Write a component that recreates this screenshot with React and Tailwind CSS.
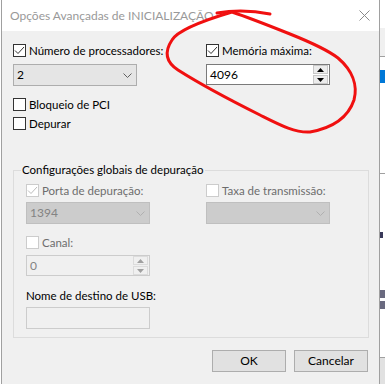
import React from 'react'

function Check({ checked, disabled }) {
  return (
    <span
      className={`flex h-[13px] w-[13px] shrink-0 items-center justify-center border bg-white ${
        disabled ? 'border-[#cccccc]' : 'border-[#333333]'
      }`}
    >
      {checked && (
        <svg width="11" height="11" viewBox="0 0 11 11" fill="none">
          <path d="M1 5.5 L4 8.5 L10 2" stroke={disabled ? '#bcbcbc' : '#333333'} strokeWidth="1" />
        </svg>
      )}
    </span>
  )
}

function CheckRow({ label, checked, disabled }) {
  return (
    <div className="flex h-[13px] items-center gap-[3px]">
      <Check checked={checked} disabled={disabled} />
      <span className={`whitespace-nowrap leading-[16px] ${disabled ? 'text-[#6d6d6d]' : 'text-black'}`}>
        {label}
      </span>
    </div>
  )
}

function Chevron({ disabled }) {
  return (
    <svg width="9" height="5" viewBox="0 0 9 5" fill="none">
      <path d="M0.5 0.5 L4.5 4.5 L8.5 0.5" stroke={disabled ? '#b0b0b0' : '#606060'} strokeWidth="1" />
    </svg>
  )
}

function Combo({ value, disabled }) {
  return (
    <div
      className={`flex h-[22px] w-[124px] items-center justify-between border pl-[3px] pr-[4px] ${
        disabled ? 'border-[#bfbfbf] bg-[#cccccc] text-[#838383]' : 'border-[#adadad] bg-[#e5e5e5] text-black'
      }`}
    >
      <span className="text-[12px] leading-[16px]">{value}</span>
      <Chevron disabled={disabled} />
    </div>
  )
}

function Arrow({ up, disabled }) {
  return (
    <svg width="7" height="4" viewBox="0 0 7 4">
      <path d={up ? 'M0 4 L3.5 0 L7 4 Z' : 'M0 0 L3.5 4 L7 0 Z'} fill={disabled ? '#a0a0a0' : '#000000'} />
    </svg>
  )
}

function Spin({ value, disabled }) {
  return (
    <div
      className={`flex h-[21px] w-[124px] items-center justify-between border pl-[3px] pr-[1px] ${
        disabled ? 'border-[#cccccc] bg-[#f0f0f0] text-[#838383]' : 'border-[#7a7a7a] bg-white text-black'
      }`}
    >
      <span className="text-[12px] leading-[16px]">{value}</span>
      <div className="flex flex-col gap-[1px]">
        <div
          className={`flex h-[9px] w-[15px] items-center justify-center border ${
            disabled ? 'border-[#dcdcdc] bg-[#f0f0f0]' : 'border-[#c8c8c8] bg-[#ececec]'
          }`}
        >
          <Arrow up disabled={disabled} />
        </div>
        <div
          className={`flex h-[9px] w-[15px] items-center justify-center border ${
            disabled ? 'border-[#dcdcdc] bg-[#f0f0f0]' : 'border-[#c8c8c8] bg-[#ececec]'
          }`}
        >
          <Arrow disabled={disabled} />
        </div>
      </div>
    </div>
  )
}

function Button({ children }) {
  return (
    <button
      type="button"
      className="flex h-[22px] w-[74px] items-center justify-center border border-[#adadad] bg-[#e1e1e1] text-[12px] leading-[16px] text-black"
    >
      {children}
    </button>
  )
}

export default function App() {
  return (
    <div className="relative flex h-[384px] w-[385px] overflow-hidden bg-white font-['Lato',sans-serif] text-[11.5px]">
      {/* sliver of the window behind */}
      <div className="w-[1px] bg-white" />

      {/* dialog */}
      <div className="flex w-[379px] flex-col border-x border-[#a0a0a0] bg-[#f0f0f0]">
        <div className="flex h-[31px] shrink-0 items-center justify-between bg-white pl-[8px] pr-[9px]">
          <span className="text-[12px] leading-[16px] text-[#999999]">Opções Avançadas de INICIALIZAÇÃO</span>
          <svg width="11" height="11" viewBox="0 0 11 11" fill="none">
            <path d="M0.5 0.5 L10.5 10.5 M10.5 0.5 L0.5 10.5" stroke="#8a8a8a" strokeWidth="1" />
          </svg>
        </div>

        <div className="flex flex-col pl-[11px] pt-[13px]">
          <div className="flex">
            <div className="flex w-[193px] flex-col">
              <CheckRow label="Número de processadores:" checked />
              <div className="mt-[7px]">
                <Combo value="2" />
              </div>
              <div className="mt-[12px]">
                <CheckRow label="Bloqueio de PCI" />
              </div>
              <div className="mt-[6px]">
                <CheckRow label="Depurar" />
              </div>
            </div>
            <div className="flex flex-col">
              <CheckRow label="Memória máxima:" checked />
              <div className="mt-[7px]">
                <Spin value="4096" />
              </div>
            </div>
          </div>

          <fieldset className="mt-[32px] w-[356px] border border-[#dcdcdc] px-[12px] pb-[8px] pt-[6px]">
            <legend className="-ml-[5px] px-[1px] leading-[16px] text-black">
              Configurações globais de depuração
            </legend>
            <div className="flex">
              <div className="flex w-[180px] flex-col">
                <CheckRow label="Porta de depuração:" checked disabled />
                <div className="mt-[5px]">
                  <Combo value="1394" disabled />
                </div>
                <div className="mt-[12px]">
                  <CheckRow label="Canal:" disabled />
                </div>
                <div className="mt-[6px]">
                  <Spin value="0" disabled />
                </div>
                <div className="mt-[12px] leading-[16px] text-black">Nome de destino de USB:</div>
                <div className="mt-[3px] h-[22px] w-[124px] border border-[#cccccc] bg-[#f0f0f0]" />
              </div>
              <div className="flex flex-col">
                <CheckRow label="Taxa de transmissão:" disabled />
                <div className="mt-[5px]">
                  <Combo value="" disabled />
                </div>
              </div>
            </div>
          </fieldset>

          <div className="mt-[12px] flex w-[355px] justify-end gap-[8px]">
            <Button>OK</Button>
            <Button>Cancelar</Button>
          </div>
        </div>
      </div>

      {/* window behind, right edge */}
      <div className="flex w-[5px] flex-col overflow-hidden bg-white">
        <div className="h-[28px]" />
        <div className="h-[29px] border-b border-[#a0a0a0] bg-[#f0f0f0]" />
        <div className="h-[13px]" />
        <div className="h-[13px] bg-[#0078d7]" />
        <div className="h-[91px] border-b border-[#a0a0a0]" />
        <div className="mt-[58px] h-[6px] w-[3px] bg-[#3a3a5a]" />
        <div className="mt-[52px] h-[8px] w-[5px] bg-[#6a6a80]" />
        <div className="mt-[3px] h-[8px] w-[5px] bg-[#6a6a80]" />
        <div className="mt-auto h-[27px] border-t border-[#a0a0a0] bg-[#e1e1e1]" />
      </div>

      {/* red marker annotation drawn over the screenshot */}
      <svg
        className="pointer-events-none absolute left-0 top-0"
        width="385"
        height="384"
        viewBox="0 0 385 384"
        fill="none"
      >
        <path d="M217 13 C235 10 255 11 270 14" stroke="#f01010" strokeWidth="3" strokeLinecap="round" />
        <path
          d="M232 12 C205 20 178 30 172 40 C164 52 166 62 178 70 C200 84 230 100 260 115 C280 125 295 133 310 132 C332 128 348 118 354 100 C358 85 352 70 338 58 C325 48 305 40 290 34 C270 26 250 18 232 12"
          stroke="#f01010"
          strokeWidth="3"
          strokeLinecap="round"
          strokeLinejoin="round"
        />
      </svg>
    </div>
  )
}
